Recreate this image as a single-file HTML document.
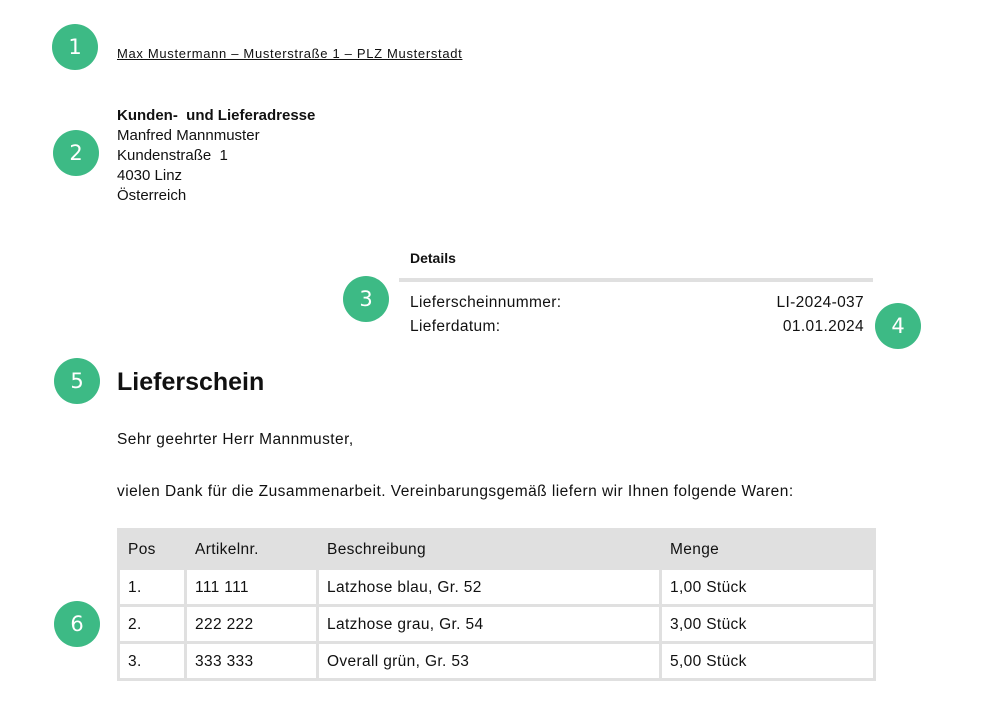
<!DOCTYPE html>
<html><head><meta charset="utf-8"><style>
body{margin:0;width:991px;height:711px;background:#fff;position:relative;font-family:"Liberation Sans",sans-serif;color:#111;overflow:hidden}
.a{position:absolute;white-space:nowrap;line-height:1}
.t{font-size:15.5px;letter-spacing:0.45px}
.c{position:absolute;width:46px;height:46px;border-radius:50%;background:#3dba85;color:#fff;font-size:21px;text-align:center;line-height:46px;font-family:"DejaVu Sans",sans-serif}
table{position:absolute;left:117px;top:528px;width:759px;border-collapse:separate;border-spacing:3px;background:#e0e0e0;font-size:15.5px;letter-spacing:0.35px}
td{background:#fff;padding:2px 0 0 8px;height:32px}
tr.h td{background:#e0e0e0;height:34px}
</style></head><body>
<div class="c" style="left:52px;top:24px">1</div>
<div class="c" style="left:53px;top:130px">2</div>
<div class="c" style="left:343px;top:276px">3</div>
<div class="c" style="left:875px;top:303px">4</div>
<div class="c" style="left:54px;top:358px">5</div>
<div class="c" style="left:54px;top:601px">6</div>
<div class="a" style="left:117px;top:47px;font-size:13px;letter-spacing:0.68px;text-decoration:underline">Max Mustermann – Musterstraße 1 – PLZ Musterstadt</div>
<div class="a" style="left:117px;top:106px;font-size:15px;line-height:20px;white-space:pre"><b>Kunden-  und Lieferadresse</b>
Manfred Mannmuster
Kundenstraße  1
4030 Linz
Österreich</div>
<div class="a" style="left:410px;top:251px;font-size:14px;font-weight:bold">Details</div>
<div style="position:absolute;left:399px;top:278px;width:474px;height:4px;background:#e0e0e0"></div>
<div class="a t" style="left:410px;top:295px;letter-spacing:0.35px">Lieferscheinnummer:</div>
<div class="a t" style="left:410px;top:319px;letter-spacing:0.35px">Lieferdatum:</div>
<div class="a t" style="right:127px;top:295px;letter-spacing:0.35px">LI-2024-037</div>
<div class="a t" style="right:127px;top:319px;letter-spacing:0.35px">01.01.2024</div>
<div class="a" style="left:117px;top:370px;font-size:25px;font-weight:bold">Lieferschein</div>
<div class="a t" style="left:117px;top:432px">Sehr geehrter  Herr Mannmuster,</div>
<div class="a t" style="left:117px;top:484px">vielen Dank für die Zusammenarbeit.  Vereinbarungsgemäß  liefern wir Ihnen folgende Waren:</div>
<table>
<tr class="h"><td style="width:56px">Pos</td><td style="width:121px">Artikelnr.</td><td style="width:332px">Beschreibung</td><td>Menge</td></tr>
<tr><td>1.</td><td>111 111</td><td>Latzhose blau, Gr. 52</td><td>1,00 Stück</td></tr>
<tr><td>2.</td><td>222 222</td><td>Latzhose  grau, Gr. 54</td><td>3,00 Stück</td></tr>
<tr><td>3.</td><td>333 333</td><td>Overall grün, Gr. 53</td><td>5,00 Stück</td></tr>
</table>
</body></html>
